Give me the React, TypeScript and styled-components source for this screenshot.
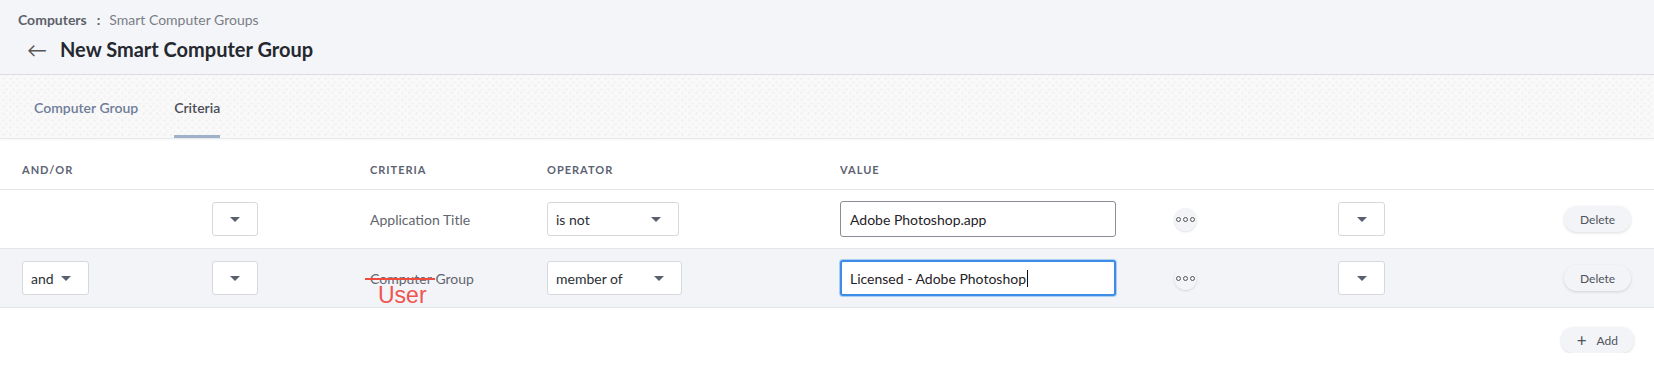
import styled, { createGlobalStyle } from "styled-components";

const Global = createGlobalStyle`
  body {
    margin: 0;
    background: #fff;
    font-family: Lato, "Open Sans", sans-serif;
    color: #2b2f36;
  }
`;

const Header = styled.div`
  background: #f4f5f9;
  height: 75px;
  padding: 10px 0 0 18px;
  box-sizing: border-box;
  border-bottom: 1px solid #dcdee4;
`;

const Crumbs = styled.div`
  display: flex;
  align-items: center;
  font-size: 14px;
  color: #7a7e86;
  height: 18px;
`;

const CrumbRoot = styled.span`
  font-weight: 700;
  color: #5d6169;
`;

const CrumbSep = styled.span`
  margin: 0 9px 0 10px;
  font-weight: 700;
  color: #5d6169;
`;

const TitleRow = styled.div`
  display: flex;
  align-items: center;
  margin-top: 9px;
  padding-left: 9px;
`;

const Back = styled.span`
  font-size: 20px;
  color: #555;
  width: 33px;
  line-height: 1;
`;

const Title = styled.h1`
  margin: 0;
  font-size: 20px;
  font-weight: 700;
  color: #25282e;
`;

const TabBar = styled.div`
  height: 63px;
  display: flex;
  align-items: stretch;
  padding-left: 34px;
  gap: 36px;
  background-color: #f9f9f9;
  background-image: radial-gradient(#f2f2f2 1px, transparent 1.6px),
    radial-gradient(#f4f4f4 1px, transparent 1.6px);
  background-size: 7px 7px, 7px 7px;
  background-position: 0 0, 3px 4px;
  border-bottom: 1px solid #e6e7ea;
  box-shadow: 0 1px 2px rgba(0, 0, 0, 0.04);
`;

const Tab = styled.div<{ $active?: boolean }>`
  display: flex;
  align-items: center;
  font-size: 14px;
  font-weight: 600;
  color: ${(p) => (p.$active ? "#4a4e57" : "#6f7d99")};
  border-bottom: 3px solid ${(p) => (p.$active ? "#9fb1c9" : "transparent")};
  padding-top: 4px;
  box-sizing: border-box;
`;

const Table = styled.div`
  margin-top: 11px;
`;

const cols = "190px 158px 177px 293px 334px 164px 226px 1fr";

const HeadRow = styled.div`
  display: grid;
  grid-template-columns: ${cols};
  padding-left: 22px;
  height: 39px;
  align-items: center;
  border-bottom: 1px solid #e2e4e8;
`;

const HeadCell = styled.div`
  font-size: 11px;
  font-weight: 700;
  letter-spacing: 1px;
  color: #5d6373;
`;

const Row = styled.div<{ $shade?: boolean }>`
  display: grid;
  grid-template-columns: ${cols};
  justify-items: start;
  padding-left: 22px;
  height: 58px;
  align-items: center;
  background: ${(p) => (p.$shade ? "#f3f4f8" : "#fff")};
  border-bottom: 1px solid #e2e4e8;
`;

const Select = styled.div<{ $w: number }>`
  width: ${(p) => p.$w}px;
  height: 34px;
  box-sizing: border-box;
  border: 1px solid #d6d8dd;
  border-radius: 3px;
  background: #fff;
  display: flex;
  align-items: center;
  justify-content: space-between;
  padding: 0 17px 0 8px;
  font-size: 14px;
  color: #2b2f36;
`;

const Caret = styled.span`
  width: 0;
  height: 0;
  border-left: 5px solid transparent;
  border-right: 5px solid transparent;
  border-top: 5px solid #5b6070;
`;

const CriteriaText = styled.div`
  position: relative;
  font-size: 14px;
  color: #62666e;
`;

const Struck = styled.span`
  position: relative;
  &::after {
    content: "";
    position: absolute;
    left: -5px;
    right: -3px;
    top: 8px;
    height: 2px;
    background: #ee4b3e;
  }
`;

const Note = styled.span`
  position: absolute;
  left: 8px;
  top: 12px;
  font-family: "Liberation Sans", Arial, sans-serif;
  font-size: 23px;
  line-height: 26px;
  color: #ef5450;
`;

const Input = styled.div<{ $focus?: boolean }>`
  width: 276px;
  height: 36px;
  box-sizing: border-box;
  border: ${(p) => (p.$focus ? "2px solid #3d8de6" : "1px solid #8a8d93")};
  box-shadow: ${(p) => (p.$focus ? "0 0 0 1px #a9cdf5" : "none")};
  border-radius: 3px;
  background: #fff;
  display: flex;
  align-items: center;
  padding-left: ${(p) => (p.$focus ? 8 : 9)}px;
  font-size: 14px;
  color: #1f2227;
`;

const Cursor = styled.span`
  display: inline-block;
  width: 1px;
  height: 17px;
  background: #111;
  margin-left: 1px;
`;

const Dots = styled.div`
  width: 23px;
  height: 23px;
  border-radius: 50%;
  background: #f3f4f7;
  box-shadow: 0 1px 2px rgba(0, 0, 0, 0.12);
  display: flex;
  align-items: center;
  justify-content: center;
  gap: 2px;
`;

const Dot = styled.span`
  width: 3px;
  height: 3px;
  border-radius: 50%;
  border: 1px solid #555;
`;

const Pill = styled.button`
  height: 26px;
  border: none;
  border-radius: 13px;
  background: #f3f4f7;
  box-shadow: 0 1px 3px rgba(0, 0, 0, 0.14);
  font-family: inherit;
  font-size: 12px;
  color: #4f535b;
  padding: 0 16px;
  display: flex;
  align-items: center;
  gap: 10px;
`;

const Footer = styled.div`
  display: flex;
  justify-content: flex-end;
  padding: 19px 20px 0 0;
`;

function App() {
  return (
    <>
      <Global />
      <Header>
        <Crumbs>
          <CrumbRoot>Computers</CrumbRoot>
          <CrumbSep>:</CrumbSep>
          <span>Smart Computer Groups</span>
        </Crumbs>
        <TitleRow>
          <Back>←</Back>
          <Title>New Smart Computer Group</Title>
        </TitleRow>
      </Header>
      <TabBar>
        <Tab>Computer Group</Tab>
        <Tab $active>Criteria</Tab>
      </TabBar>
      <Table>
        <HeadRow>
          <HeadCell>AND/OR</HeadCell>
          <div />
          <HeadCell>CRITERIA</HeadCell>
          <HeadCell>OPERATOR</HeadCell>
          <HeadCell>VALUE</HeadCell>
        </HeadRow>
        <Row>
          <div />
          <Select $w={46}>
            <span />
            <Caret />
          </Select>
          <CriteriaText>Application Title</CriteriaText>
          <Select $w={132}>
            is not
            <Caret />
          </Select>
          <Input>Adobe Photoshop.app</Input>
          <Dots>
            <Dot />
            <Dot />
            <Dot />
          </Dots>
          <Select $w={47}>
            <span />
            <Caret />
          </Select>
          <Pill>Delete</Pill>
        </Row>
        <Row $shade>
          <Select $w={67}>
            and
            <Caret />
          </Select>
          <Select $w={46}>
            <span />
            <Caret />
          </Select>
          <CriteriaText>
            <Struck>Computer</Struck> Group
            <Note>User</Note>
          </CriteriaText>
          <Select $w={135}>
            member of
            <Caret />
          </Select>
          <Input $focus>
            Licensed - Adobe Photoshop
            <Cursor />
          </Input>
          <Dots>
            <Dot />
            <Dot />
            <Dot />
          </Dots>
          <Select $w={47}>
            <span />
            <Caret />
          </Select>
          <Pill>Delete</Pill>
        </Row>
      </Table>
      <Footer>
        <Pill>
          <span style={{ fontSize: 17 }}>+</span>
          Add
        </Pill>
      </Footer>
    </>
  );
}

export default App;
